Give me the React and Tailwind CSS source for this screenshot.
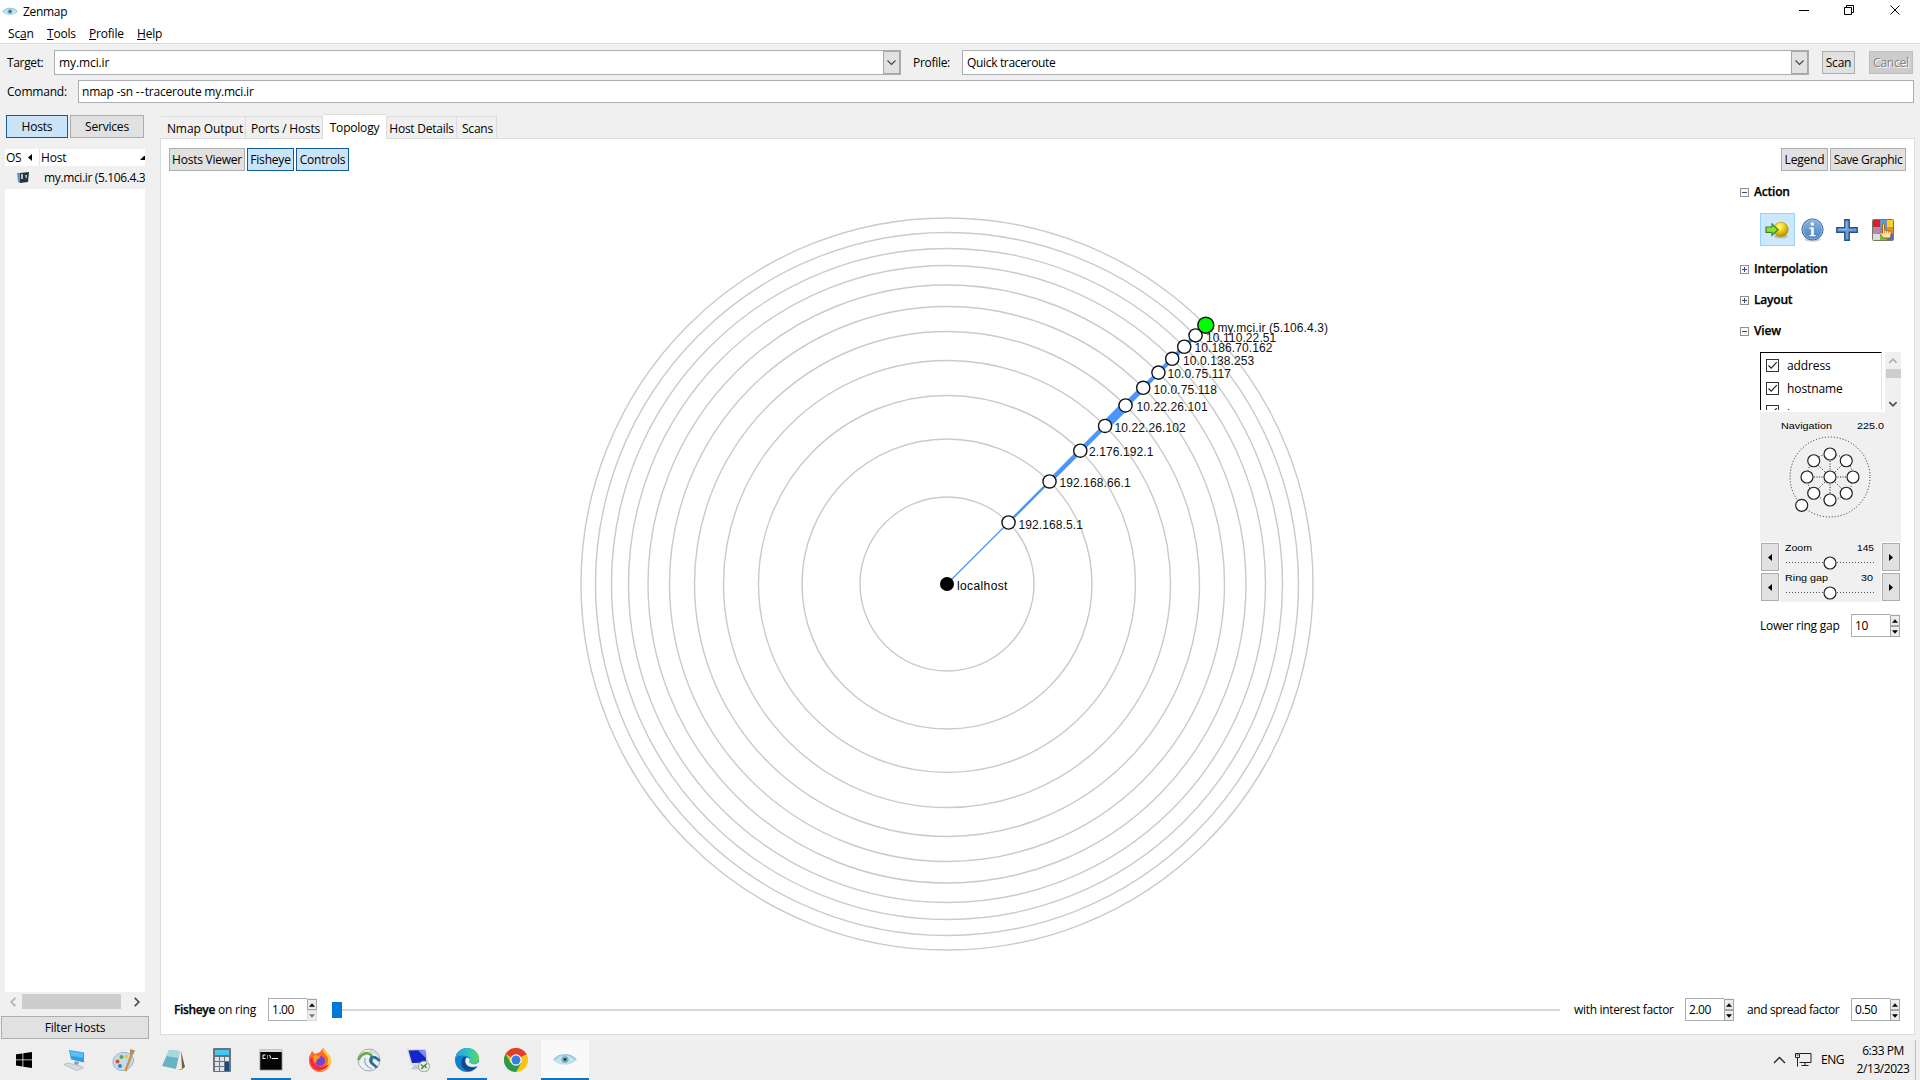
import React from "react";

const RINGS = [87, 145, 188.5, 223.5, 252.5, 277.5, 299, 318.5, 335.5, 351.5, 366];
const NODES = [
  { label: "192.168.5.1", x: 1018.5, y: 529, w: 1.3 },
  { label: "192.168.66.1", x: 1059.5, y: 487, w: 2.5 },
  { label: "2.176.192.1", x: 1089, y: 456, w: 4.5 },
  { label: "10.22.26.102", x: 1114.5, y: 432, w: 4.5 },
  { label: "10.22.26.101", x: 1136.5, y: 411, w: 9 },
  { label: "10.0.75.118", x: 1153.5, y: 394, w: 5.5 },
  { label: "10.0.75.117", x: 1167.5, y: 378, w: 4 },
  { label: "10.0.138.253", x: 1183, y: 365, w: 4 },
  { label: "10.186.70.162", x: 1194.5, y: 352, w: 4 },
  { label: "10.110.22.51", x: 1206, y: 342, w: 4 },
  { label: "my.mci.ir (5.106.4.3)", x: 1217.5, y: 332, w: 4 },
];
const CX = 947;
const CY = 584;
const K = Math.SQRT1_2;

function Topology() {
  return (
    <svg className="block h-[740px] w-[800px] shrink-0 tracking-[0.1px]" viewBox="560 214 800 740" fontFamily="Liberation Sans, Arial, sans-serif" fontSize="12">
      {RINGS.map((r) => (
        <circle key={r} cx={CX} cy={CY} r={r} fill="none" stroke="#cacaca" strokeWidth="1.4" />
      ))}
      {NODES.map((n, i) => {
        const a = (i ? RINGS[i - 1] : 0) * K;
        const b = RINGS[i] * K;
        return <line key={n.label} x1={CX + a} y1={CY - a} x2={CX + b} y2={CY - b} stroke="#4b96fb" strokeWidth={n.w} />;
      })}
      <circle cx={CX} cy={CY} r="7" fill="#000" />
      {NODES.map((n, i) => {
        const last = i === NODES.length - 1;
        return (
          <circle key={n.label} cx={CX + RINGS[i] * K} cy={CY - RINGS[i] * K} r={last ? 8 : 6.6} fill={last ? "#00ff00" : "#fff"} stroke="#111" strokeWidth="1.4" />
        );
      })}
      <text x="957" y="590" textLength="50.5">localhost</text>
      {NODES.map((n) => (
        <text key={n.label} x={n.x} y={n.y} fill="#111">{n.label}</text>
      ))}
    </svg>
  );
}

function Eye({ className }) {
  return (
    <svg className={className} viewBox="0 0 24 14" preserveAspectRatio="none">
      <path d="M0 7C4 2.500 8 1 12 1S20 2.500 24 7c-4 4.500-8 5.500-12 5.500S4 11.500 0 7z" fill="#b5dcec" />
      <path d="M1 7C5 3 8 2 12 2s7 1 11 5" fill="none" stroke="#86b9d0" strokeWidth="1.2" strokeDasharray="2 .8" />
      <path d="M3 7.500C6 4 9 3.500 12 3.500s6 .5 9 4c-3 3-6 4-9 4s-6-1-9-4z" fill="#c5e2ee" />
      <circle cx="12" cy="7" r="3.600" fill="#74adc6" />
      <circle cx="12" cy="7" r="1.5" fill="#243e4c" />
    </svg>
  );
}

function Btn({ children, className = "", on, off }) {
  const tone = on
    ? "border-[#0f5c9b] bg-[#cce4f7]"
    : off
      ? "border-[#bfbfbf] bg-[#cccccc] text-[#838383] [text-shadow:1px_1px_0_#fff]"
      : "border-[#adadad] bg-[#e1e1e1]";
  return <button className={`flex h-[23px] shrink-0 items-center justify-center border whitespace-nowrap ${tone} ${className}`}>{children}</button>;
}

function Combo({ children, className }) {
  return (
    <div className={`flex h-[25px] shrink-0 items-center border border-[#abadb3] bg-white pl-1 ${className}`}>
      <span className="flex-1">{children}</span>
      <span className="flex h-full w-[17px] items-center justify-center border border-[#a6a6a6] bg-[#e1e1e1]">
        <svg className="h-[5px] w-[9px]" viewBox="0 0 9 5"><path d="M.5.5l4 4 4-4" fill="none" stroke="#444" strokeWidth="1.1" /></svg>
      </span>
    </div>
  );
}

function Tri({ dir, color = "#000" }) {
  const d = { up: "M0 4L3.500 0 7 4z", down: "M0 0h7L3.500 4z" }[dir];
  return <svg className="h-[4px] w-[6px]" viewBox="0 0 7 4"><path d={d} fill={color} /></svg>;
}

function Spin({ value, className = "", downOff }) {
  return (
    <div className={`flex h-[23px] w-[49px] shrink-0 ${className}`}>
      <div className="flex w-[39px] items-center border border-r-0 border-[#abadb3] bg-white pl-[3px] tracking-[-0.45px]">{value}</div>
      <div className="flex w-[10px] flex-col bg-[#f0f0f0] pt-px">
        <span className="flex h-[11px] items-center justify-center border border-[#a5a5a5] bg-[#ececec]"><Tri dir="up" /></span>
        <span className={`flex h-[11px] items-center justify-center border bg-[#ececec] ${downOff ? "border-[#dcdcdc]" : "border-[#a5a5a5]"}`}>
          <Tri dir="down" color={downOff ? "#777" : "#000"} />
        </span>
      </div>
    </div>
  );
}

function Chevron({ dir, color = "#505050" }) {
  const d = { left: "M7 1L2.500 5.500 7 10", right: "M3 1l4.500 4.500L3 10", up: "M1.500 7.500L5.500 3.500l4 4", down: "M1.500 3.500l4 4 4-4" }[dir];
  return <svg className="h-[10px] w-[10px]" viewBox="0 0 11 11"><path d={d} fill="none" stroke={color} strokeWidth="1.9" /></svg>;
}

function Section({ title, open, className = "" }) {
  return (
    <div className={`flex h-[18px] items-center ${className}`}>
      <svg className="mr-[5px] h-[9px] w-[9px]" viewBox="0 0 9 9">
        <rect x=".5" y=".5" width="8" height="8" fill="#fafafa" stroke="#919191" />
        <path d={open ? "M2 4.500h5" : "M2 4.500h5M4.500 2v5"} stroke="#34498c" />
      </svg>
      <b className="font-semibold tracking-[-0.2px] [-webkit-text-stroke:0.25px_#000]">{title}</b>
    </div>
  );
}

function ActionIcons() {
  return (
    <div className="mt-[12px] ml-[20px] flex h-[33px] items-center">
      <div className="flex h-[33px] w-[35px] items-center justify-center border border-[#99d1ff] bg-[#cce8ff] pr-[2px]">
        <svg className="h-[18px] w-[24px]" viewBox="0 0 24 18">
          <defs>
            <radialGradient id="ball" cx=".4" cy=".3" r=".7"><stop offset="0" stopColor="#fffbb0" /><stop offset=".35" stopColor="#f7df22" /><stop offset="1" stopColor="#b58c00" /></radialGradient>
          </defs>
          <ellipse cx="16" cy="15.500" rx="7" ry="2" fill="#9dabab" opacity=".6" />
          <circle cx="16" cy="8.500" r="7.300" fill="url(#ball)" stroke="#b99208" strokeWidth=".6" />
          <path d="M1 6h6V3l6 5.700-6 5.600v-3H1z" fill="#8fdc45" stroke="#42861b" strokeWidth="1.200" />
        </svg>
      </div>
      <svg className="ml-[6px] h-[24px] w-[23px]" viewBox="0 0 23 24">
        <defs><linearGradient id="info" x2="0" y2="1"><stop stopColor="#8db4df" /><stop offset="1" stopColor="#4a7fbe" /></linearGradient></defs>
        <ellipse cx="11.500" cy="21.500" rx="8" ry="2" fill="#ccc" />
        <circle cx="11.500" cy="11.500" r="10.600" fill="url(#info)" stroke="#3d6ba6" />
        <circle cx="11.500" cy="11.500" r="9.500" fill="none" stroke="#a5c4e6" strokeWidth=".7" />
        <circle cx="11.300" cy="6" r="1.700" fill="#fff" />
        <path d="M8.500 9.500h4.300v7.500h1.700v1.300H8.500V17h1.700v-6H8.500z" fill="#fff" />
      </svg>
      <svg className="ml-[12px] h-[22px] w-[22px]" viewBox="0 0 22 22">
        <path d="M8.800.8h4.400v8h8v4.400h-8v8H8.800v-8h-8V8.800h8z" fill="#6f9fd3" stroke="#24508c" strokeWidth="1.400" />
        <path d="M10.200 2.500v7.700H2.500" fill="none" stroke="#a2c3e6" strokeWidth=".8" />
      </svg>
      <svg className="ml-[14px] h-[22px] w-[22px]" viewBox="0 0 22 22">
        <rect x=".5" y=".5" width="21" height="21" rx="1" fill="#fff" stroke="#776" />
        <rect x="1" y="1" width="7" height="7" fill="#d8202a" /><rect x="8" y="1" width="7" height="7" fill="#6b93c4" /><rect x="15" y="1" width="6" height="7" fill="#f5d12e" />
        <rect x="1" y="8" width="7" height="7" fill="#b585b0" /><rect x="8" y="8" width="7" height="7" fill="#7493bb" /><rect x="15" y="8" width="6" height="7" fill="#ee8a28" />
        <rect x="1" y="15" width="7" height="6" fill="#dcdcdc" /><rect x="8" y="15" width="7" height="6" fill="#70c33d" /><rect x="15" y="15" width="6" height="6" fill="#4c77ac" />
        <path d="M10.500 6c0-1.400 2-1.400 2 0v5l5.500 1.200c1 .3 1.200 1 1.100 2L18.500 19h-7.200L8 14.800c-.7-1.200.7-2 1.500-1.200l1 .9z" fill="#ffe3b5" stroke="#a35e12" strokeWidth=".9" />
        <path d="M12.500 11v3M14.600 11.500v3M16.700 12v2.500" stroke="#c17c2c" strokeWidth=".7" />
      </svg>
    </div>
  );
}

function Check({ label, textClass = "pt-px" }) {
  return (
    <div className="flex h-[23px] shrink-0 items-center pl-[5px]">
      <span className="mr-[8px] flex h-[13px] w-[13px] items-center justify-center border border-[#333] bg-white">
        <svg className="h-[9px] w-[11px]" viewBox="0 0 11 9"><path d="M1.500 4.500l2.700 2.700L9.800 1.200" fill="none" stroke="#222" strokeWidth="1.200" /></svg>
      </span>
      <span className={`tracking-[-0.1px] ${textClass}`}>{label}</span>
    </div>
  );
}

function Navigation() {
  const dots = [0, 45, 90, 135, 180, 225, 270, 315].map((a) => [70 + 23 * Math.cos((a * Math.PI) / 180), 65 + 23 * Math.sin((a * Math.PI) / 180)]);
  return (
    <svg className="block h-[130px] w-[141px] bg-[#f0f0f0] tracking-normal" viewBox="0 0 141 130" fontFamily="Liberation Sans, Arial, sans-serif" fontSize="9.500">
      <text x="21" y="17" textLength="51" lengthAdjust="spacingAndGlyphs">Navigation</text>
      <text x="97" y="17" textLength="27" lengthAdjust="spacingAndGlyphs">225.0</text>
      <g fill="none" stroke="#222" strokeWidth="1" strokeDasharray="1 2">
        <circle cx="70" cy="65" r="40" />
        <circle cx="70" cy="65" r="23" />
        {dots.map(([x, y]) => <line key={`${x}-${y}`} x1="70" y1="65" x2={x} y2={y} strokeDasharray="1 1.500" />)}
      </g>
      <g fill="#fff" stroke="#222" strokeWidth="1.200">
        {dots.map(([x, y]) => <circle key={`${x}-${y}`} cx={x} cy={y} r="6" />)}
        <circle cx="70" cy="65" r="6" />
        <circle cx="41.700" cy="93.300" r="6" />
      </g>
    </svg>
  );
}

function ArrowBtn({ right }) {
  return (
    <span className="flex h-[28px] w-[18px] items-center justify-center border border-[#adadad] bg-[#e1e1e1]">
      <svg className="h-[7px] w-[4px]" viewBox="0 0 4 7"><path d={right ? "M0 0l4 3.500L0 7z" : "M4 0L0 3.500 4 7z"} /></svg>
    </span>
  );
}

function NavSlider({ name, value, nameWidth, valueX, valueWidth }) {
  return (
    <div className="flex h-[30px] w-[141px] items-center justify-between px-px">
      <ArrowBtn />
      <svg className="block h-[30px] w-[101px] bg-[#f0f0f0] tracking-normal" viewBox="0 0 101 30" fontFamily="Liberation Sans, Arial, sans-serif" fontSize="9.500">
        <text x="5" y="9" textLength={nameWidth} lengthAdjust="spacingAndGlyphs">{name}</text>
        <text x={valueX} y="9" textLength={valueWidth} lengthAdjust="spacingAndGlyphs">{value}</text>
        <line x1="6" y1="20.500" x2="95" y2="20.500" stroke="#555" strokeDasharray="1 2" />
        <circle cx="50" cy="21" r="6" fill="#fff" stroke="#222" strokeWidth="1.200" />
      </svg>
      <ArrowBtn right />
    </div>
  );
}

function Controls() {
  return (
    <div className="flex w-[167px] shrink-0 flex-col pt-[12px]">
      <Section title="Action" open />
      <ActionIcons />
      <Section title="Interpolation" className="mt-[14px]" />
      <Section title="Layout" className="mt-[13px]" />
      <Section title="View" open className="mt-[13px]" />
      <div className="mt-[12px] ml-[20px] flex h-[60px] w-[141px] shrink-0">
        <div className="flex h-[58px] w-[122px] flex-col overflow-hidden border-t border-r border-l border-t-black border-r-[#e5e5e5] border-l-black pt-[1px]">
          <Check label="address" />
          <Check label="hostname" />
          <Check label="icon" textClass="pt-[5px]" />
        </div>
        <div className="ml-[3px] flex w-[16px] flex-col items-center bg-[#f0f0f0]">
          <span className="flex h-[17px] items-center"><Chevron dir="up" color="#b0b0b0" /></span>
          <span className="h-[9px] w-[15px] bg-[#cdcdcd]" />
          <span className="mt-auto flex h-[17px] items-center"><Chevron dir="down" /></span>
        </div>
      </div>
      <div className="ml-[20px] w-[141px] shrink-0">
        <Navigation />
        <NavSlider name="Zoom" value="145" nameWidth="27" valueX="77" valueWidth="17" />
        <NavSlider name="Ring gap" value="30" nameWidth="43" valueX="81" valueWidth="12" />
        <div className="mt-[12px] flex items-center justify-between pr-px">
          <span className="tracking-[-0.25px] whitespace-nowrap">Lower ring gap</span>
          <Spin value="10" />
        </div>
      </div>
    </div>
  );
}

const TASKS = [
  { name: "computer", art: <><path d="M6 2l15 2.500v10L8 11.500z" fill="#2d9fe8" /><path d="M7 3l13 2.300v4.500L8 8z" fill="#5dbdf5" /><path d="M12 13l4 1-1 3-4-1z" fill="#8aa0b0" /><path d="M1 16.500l4-1.500 14 3.500 1.500 1.500L13 22.500z" fill="#d4dbe1" stroke="#9caab4" strokeWidth=".6" /></> },
  { name: "paint", art: <><path d="M1 14C1 8 7 4 13 4.500s10 5.500 8 10.500-6 7.500-11 7.500S1 19 1 14z" fill="#c4dcea" stroke="#7faac4" strokeWidth=".8" /><circle cx="5.500" cy="13.500" r="2" fill="#e44c3c" /><circle cx="9.500" cy="9" r="2" fill="#4caf50" /><circle cx="14.500" cy="8.500" r="1.800" fill="#f4c430" /><circle cx="8" cy="18" r="2" fill="#3f82d0" /><path d="M20.500 4l-7 19" stroke="#d58b3b" strokeWidth="2.200" /><path d="M18 1l5 1.500-2 4.500-3-1z" fill="#b98a5c" /></> },
  { name: "notes", art: <><path d="M20 3l4 16-4 3-4-1z" fill="#6d6249" /><path d="M8 2l12 1 1 18-5 1z" fill="#f1efe4" /><path d="M8 2l11 1-4 18L1 18z" fill="#67b3c4" /><path d="M8 2l11 1-1.500 7L5 8z" fill="#a6d8e0" /></> },
  { name: "calculator", art: <><rect x="3" y="0" width="18" height="24" rx="1" fill="#6b747c" /><rect x="5" y="2" width="14" height="5" fill="#45c8f0" />{[5, 10, 15].map((x) => [9, 14, 19].map((y) => <rect key={`${x}${y}`} x={x} y={y} width="4" height="4" fill="#dfe4e8" />))}<rect x="15" y="14" width="4" height="9" fill="#164a85" /></> },
  { name: "terminal", run: true, art: <><rect x="1" y="2" width="22" height="20" fill="#050505" stroke="#8b8b8b" strokeWidth=".8" /><rect x="1" y="2" width="22" height="2" fill="#d5d5d5" /><path d="M6.500 7H4v3.500h2.500M8.500 7.500v1M8.500 9.500v1M10.500 7l1.500 3.500M13 10.500h6" stroke="#fff" fill="none" /></> },
  { name: "firefox", art: <><path d="M1 9l3-6 3 3 5-2 3-4 3 4c4 3 5 7 5 9 0 6-5 11-11 11S1 19 1 13z" fill="#ff6a2b" /><path d="M14 1c1 4 5 5 6 10 1 5-3 10-8 12 7 0 11-5 11-11 0-5-3-7-5-8z" fill="#ffd43b" /><path d="M2 13c1 7 6 10 11 9 4 0 7-3 8-6-4 3-9 4-13 1-3-2-4-5-2-8-3 0-4 1-4 4z" fill="#f5274e" /><circle cx="12" cy="13" r="5" fill="#7542d6" /><path d="M5 8c3-2 6 0 8 1l-3 2c-2 1-2 3-1 4-3-1-5-4-4-7z" fill="#ff9a1f" /></> },
  { name: "connect", art: <><circle cx="12" cy="12" r="11" fill="#eef1f2" stroke="#a4abb0" /><path d="M1.500 12C4 5 11 3.500 14 7c2 3 1 6-1 7" stroke="#6ba84e" strokeWidth="2.800" fill="none" /><path d="M12 2c5 0 8 2 10 7-3-3-6-4-10-4z" fill="#cfd9d6" /><path d="M22.500 13c-4-5-9-5-9-1 0 5 5 4 6 8" stroke="#2f6ca0" strokeWidth="2.800" fill="none" /><path d="M8 10c-1 5 2 9 7 11" stroke="#86aecb" strokeWidth="1.300" fill="none" /></> },
  { name: "remote", art: <><path d="M1 1l19 0 2 14-17 2z" fill="#d6d8da" /><path d="M2.500 2.500l16.500-.5 1.300 12.500L6 15z" fill="#1724c9" /><path d="M12 2.300l7-.3.800 8z" fill="#7b8df0" /><path d="M8 17h7l2 4.500H5z" fill="#c5c9cb" /><circle cx="18" cy="18.500" r="5.500" fill="#e6ede2" stroke="#888" strokeWidth=".8" /><path d="M15 16.500l2.500 2-2 2.500M21 15.500l-2.500 2 2 2.500" stroke="#318b31" strokeWidth="1.300" fill="none" /></> },
  { name: "edge", run: true, art: <><defs><linearGradient id="edgeTop"><stop stopColor="#299fdf" /><stop offset=".6" stopColor="#31c7bb" /><stop offset="1" stopColor="#65d94c" /></linearGradient></defs><circle cx="12" cy="12" r="12" fill="#1380cf" /><path d="M.3 10C2 3 7 0 12 0c7 0 12 5 12 10 0 4-3 6-6 6-3 0-4-1-4-2 2-2 1-6-3-6C7 7 2 7 .3 10z" fill="url(#edgeTop)" /><path d="M9 9c-4 3-4 12 4 14 4 0 7-2 9-4-6 2-12-1-11-7 0-2 1-2 1-3z" fill="#114a8b" /><path d="M14 14c2-2 0-5-3-4-2 4 0 9 7 9l5-1c1-1 1-2 1-4-4 4-9 2-10 0z" fill="#eee" /></> },
  { name: "chrome", art: <><circle cx="12" cy="12" r="12" fill="#fbc116" /><path d="M12 12L1.600 6A12 12 0 0 1 22.400 6z" fill="#e33b2e" /><path d="M1.600 6A12 12 0 0 0 12 24l5.200-9H6.800z" fill="#269c4b" /><path d="M12 6.500h10.700l-.3-.5H12z" fill="#e33b2e" /><circle cx="12" cy="12" r="5.700" fill="#fff" /><circle cx="12" cy="12" r="4.500" fill="#357ee8" /></> },
];

function Taskbar() {
  return (
    <footer className="flex h-[40px] shrink-0 bg-[#eeeeee]">
      <div className="flex w-[50px] items-center pl-[16px]">
        <svg className="h-[16px] w-[16px]" viewBox="0 0 16 16"><path d="M0 2.300L6.500 1.400v6.100H0zM7.300 1.300L16 0v7.500H7.300zM0 8.300h6.500v6.200L0 13.600zM7.300 8.300H16V16l-8.700-1.300z" /></svg>
      </div>
      {TASKS.map((t) => (
        <div key={t.name} className="flex h-full w-[49px] flex-col items-center">
          <svg className="mt-[8px] h-[24px] w-[24px]" viewBox="0 0 24 24">{t.art}</svg>
          {t.run && <span className="mt-[6px] h-[2px] w-[40px] bg-[#0a74c9]" />}
        </div>
      ))}
      <div className="ml-px flex h-full w-[48px] flex-col items-center bg-[#f9f9f9]">
        <Eye className="mt-[13px] h-[13px] w-[24px]" />
        <span className="mt-auto h-[2px] w-full bg-[#0a74c9]" />
      </div>
      <div className="ml-auto flex items-center">
        <svg className="h-[8px] w-[13px]" viewBox="0 0 13 8"><path d="M1 7l5.500-5.500L12 7" fill="none" stroke="#222" strokeWidth="1.300" /></svg>
        <svg className="ml-[9px] h-[14px] w-[17px]" viewBox="0 0 17 14"><path d="M5 .5h11v9H4.500M10 10v2.500M6.500 12.500h7" fill="none" stroke="#222" /><path d="M.5.500h4v4h-4zM2.500 5v8.500" fill="none" stroke="#222" /><path d="M1.500 2h2" stroke="#222" /></svg>
        <span className="ml-[9px] w-[23px] tracking-[-0.5px]">ENG</span>
        <div className="ml-[13px] flex w-[52px] flex-col items-center leading-[18px] tracking-[-0.45px] whitespace-nowrap">
          <span>6:33 PM</span>
          <span>2/13/2023</span>
        </div>
        <span className="ml-[6px] h-full w-[5px] border-l border-[#bdbdbd]" />
      </div>
    </footer>
  );
}

function HostPanel() {
  return (
    <aside className="flex w-[160px] shrink-0 flex-col">
      <div className="mt-[1px] ml-[6px] flex gap-[2px]">
        <Btn on className="w-[62px]">Hosts</Btn>
        <Btn className="w-[74px]">Services</Btn>
      </div>
      <div className="mt-[11px] ml-[5px] flex h-[843px] w-[140px] flex-col overflow-hidden bg-white">
        <div className="flex h-[17px] shrink-0 items-center">
          <span className="flex h-full w-[35px] items-center border-r border-[#e5e5e5] pl-[1px] tracking-[-0.4px]">
            OS
            <svg className="ml-[7px] h-[7px] w-[4px]" viewBox="0 0 4 7"><path d="M4 0L0 3.500 4 7z" /></svg>
          </span>
          <span className="flex-1 pl-[1px]">Host</span>
          <svg className="h-[4px] w-[5px]" viewBox="0 0 5 4"><path d="M0 4l4-4h1v4z" /></svg>
        </div>
        <div className="flex h-[23px] shrink-0 items-center bg-[#f0f0f0]">
          <svg className="ml-[12px] h-[12px] w-[12px] shrink-0" viewBox="0 0 12 12"><path d="M0 1h3v10L1 10z" fill="#5b9bc2" /><path d="M3 1l9-1-1 10-8 1z" fill="#29323b" /><path d="M4 2l2 0v5H4zM8 3h2v2L9 7" fill="#b8bfc5" /></svg>
          <span className="ml-[15px] shrink-0 tracking-[-0.36px] whitespace-nowrap">my.mci.ir (5.106.4.3</span>
        </div>
      </div>
      <div className="mt-[2px] ml-[5px] flex h-[15px] w-[140px] items-center">
        <span className="flex w-[17px] justify-center"><Chevron dir="left" color="#b0b0b0" /></span>
        <span className="h-full w-[99px] bg-[#cdcdcd]" />
        <span className="ml-[11px]"><Chevron dir="right" /></span>
      </div>
      <Btn className="mt-[7px] ml-[1px] w-[148px]">Filter Hosts</Btn>
    </aside>
  );
}

function Tab({ children, className }) {
  return <span className={`flex h-[22px] items-center justify-center border-t border-r border-[#dcdcdc] pt-[2px] whitespace-nowrap ${className}`}>{children}</span>;
}

export default function App() {
  return (
    <div className="flex h-[1080px] w-[1920px] flex-col overflow-hidden bg-[#f0f0f0] font-['Open_Sans','Noto_Sans',sans-serif] text-[12px] leading-[16px] tracking-[-0.2px] text-black">
      <header className="h-[44px] shrink-0 border-b border-[#dadada] bg-white">
        <div className="flex h-[23px] items-center">
          <Eye className="ml-[2px] h-[9px] w-[16px]" />
          <span className="ml-[5px] tracking-[-0.3px]">Zenmap</span>
          <svg className="mt-[-3px] mr-[19px] ml-auto h-[12px] w-[102px]" viewBox="0 0 102 12" fill="none" stroke="#000">
            <path d="M0 6.500h10M45.500 3.500h7v7h-7zM47.500 3V1.500h7v7H53M91.500 1.500l9 9M100.500 1.500l-9 9" />
          </svg>
        </div>
        <nav className="mt-px flex h-[20px] items-center pl-[8px]">
          <span className="w-[39px]">Sc<u>a</u>n</span>
          <span className="w-[42px]"><u>T</u>ools</span>
          <span className="w-[48px]"><u>P</u>rofile</span>
          <span><u>H</u>elp</span>
        </nav>
      </header>

      <div className="mt-[6px] flex h-[25px] shrink-0 items-center pl-[7px]">
        <span className="w-[47px] tracking-[-0.35px]">Target:</span>
        <Combo className="w-[847px] tracking-[-0.1px]">my.mci.ir</Combo>
        <span className="w-[49px] pl-[12px] tracking-[-0.3px]">Profile:</span>
        <span className="w-[12px]" />
        <Combo className="w-[847px] tracking-[-0.33px]">Quick traceroute</Combo>
        <Btn className="ml-[13px] w-[33px]">Scan</Btn>
        <Btn off className="ml-[14px] w-[44px]">Cancel</Btn>
      </div>
      <div className="mt-[5px] flex h-[23px] shrink-0 items-center pl-[7px]">
        <span className="w-[71px]">Command:</span>
        <div className="flex h-[23px] w-[1836px] items-center border border-[#abadb3] bg-white pl-[3px] tracking-[-0.22px]">
          <span>nmap -sn <span className="tracking-[0.7px]">--</span>traceroute my.mci.ir</span>
        </div>
      </div>

      <div className="mt-[11px] flex h-[926px] shrink-0">
        <HostPanel />
        <main className="flex w-[1755px] flex-col">
          <div className="flex h-[24px] shrink-0 items-end pl-px">
            <Tab className="w-[85px] pl-[4px] tracking-[-0.1px]">Nmap Output</Tab>
            <Tab className="w-[77px] pl-[3px] tracking-[-0.2px]">Ports / Hosts</Tab>
            <span className="relative z-10 -mb-px flex h-[25px] w-[63px] items-center justify-center border-t border-[#dcdcdc] bg-white pt-[2px]">Topology</span>
            <Tab className="w-[71px] border-l tracking-[-0.25px]">Host Details</Tab>
            <Tab className="w-[40px] pl-[2px]">Scans</Tab>
          </div>
          <section className="flex h-[897px] shrink-0 flex-col border border-[#dcdcdc] bg-white">
            <div className="mt-[9px] flex h-[23px] shrink-0 gap-[2px] pr-[8px] pl-[8px]">
              <Btn className="w-[76px] tracking-[-0.25px]">Hosts Viewer</Btn>
              <Btn on className="w-[47px]">Fisheye</Btn>
              <Btn on className="w-[53px]">Controls</Btn>
              <span className="flex-1" />
              <Btn className="w-[47px]">Legend</Btn>
              <Btn className="w-[76px] tracking-[-0.35px]">Save Graphic</Btn>
            </div>
            <div className="flex h-[827px] shrink-0 justify-between">
              <div className="pt-[43px] pl-[399px]"><Topology /></div>
              <div className="mr-[7px]"><Controls /></div>
            </div>
            <div className="flex h-[23px] shrink-0 items-center pl-[13px]">
              <span className="w-[94px] whitespace-nowrap"><b className="font-semibold tracking-[-0.35px] [-webkit-text-stroke:0.25px_#000]">Fisheye</b> on ring</span>
              <Spin value="1.00" downOff />
              <span className="ml-[15px] h-[16px] w-[10px] bg-[#0078d7]" />
              <span className="h-[2px] w-[1218px] bg-[#d6d6d6]" />
              <span className="ml-[14px] w-[111px] tracking-[-0.32px] whitespace-nowrap">with interest factor</span>
              <Spin value="2.00" />
              <span className="ml-[13px] w-[104px] tracking-[-0.4px] whitespace-nowrap">and spread factor</span>
              <Spin value="0.50" />
            </div>
          </section>
        </main>
      </div>
      <Taskbar />
    </div>
  );
}
